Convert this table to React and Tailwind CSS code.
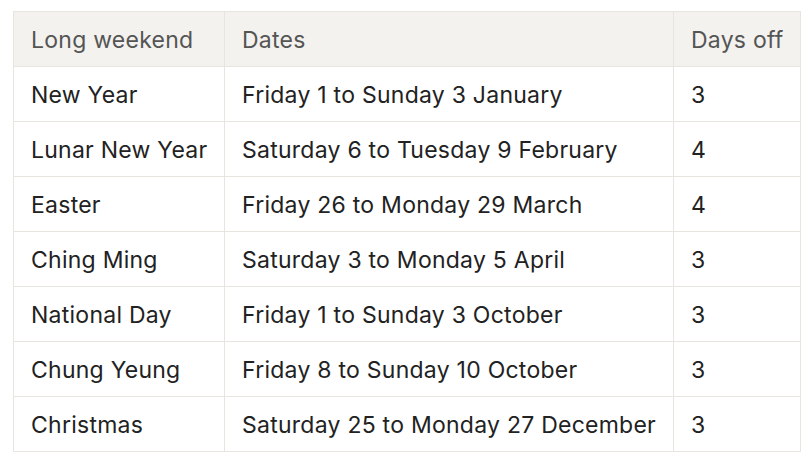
import React from "react";

const rows = [
  ["New Year", "Friday 1 to Sunday 3 January", "3"],
  ["Lunar New Year", "Saturday 6 to Tuesday 9 February", "4"],
  ["Easter", "Friday 26 to Monday 29 March", "4"],
  ["Ching Ming", "Saturday 3 to Monday 5 April", "3"],
  ["National Day", "Friday 1 to Sunday 3 October", "3"],
  ["Chung Yeung", "Friday 8 to Sunday 10 October", "3"],
  ["Christmas", "Saturday 25 to Monday 27 December", "3"],
];

export default function App() {
  return (
    <div className="bg-white w-[812px] h-[462px] pt-[11px] pl-[13px]" style={{ fontFamily: "Inter, 'Noto Sans', sans-serif" }}>
      <table className="table-fixed border-collapse w-[787px] text-[23px] leading-none tracking-[0.25px]">
        <colgroup>
          <col className="w-[211px]" />
          <col className="w-[449px]" />
          <col className="w-[127px]" />
        </colgroup>
        <thead>
          <tr className="bg-[#f3f2ee] text-[#555555]">
            <th className="h-[55px] border border-[#e7e5de] pl-[17px] pr-0 pt-[2px] text-left font-normal whitespace-nowrap">Long weekend</th>
            <th className="h-[55px] border border-[#e7e5de] pl-[17px] pr-0 pt-[2px] text-left font-normal whitespace-nowrap">Dates</th>
            <th className="h-[55px] border border-[#e7e5de] pl-[17px] pr-0 pt-[2px] text-left font-normal whitespace-nowrap">Days off</th>
          </tr>
        </thead>
        <tbody className="text-[#222222]">
          {rows.map((r) => (
            <tr key={r[0]}>
              <td className="h-[55px] border border-[#e7e5de] pl-[17px] pr-0 pt-[2px] whitespace-nowrap">{r[0]}</td>
              <td className="h-[55px] border border-[#e7e5de] pl-[17px] pr-0 pt-[2px] whitespace-nowrap">{r[1]}</td>
              <td className="h-[55px] border border-[#e7e5de] pl-[17px] pr-0 pt-[2px] whitespace-nowrap">{r[2]}</td>
            </tr>
          ))}
        </tbody>
      </table>
    </div>
  );
}
